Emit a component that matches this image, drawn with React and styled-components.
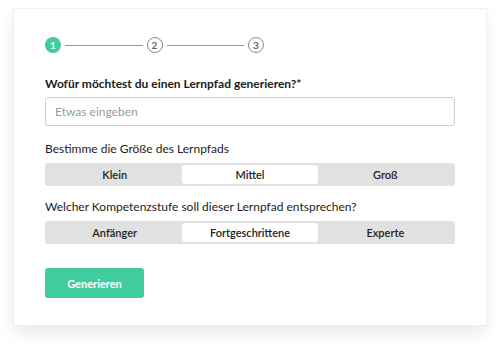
import React, { useState } from 'react';
import styled, { createGlobalStyle } from 'styled-components';

const Global = createGlobalStyle`
    body {
        margin: 0;
        background: #fff;
        font-family: Lato, "Liberation Sans", sans-serif;
        color: #1c1c1c;
    }
`;

const Page = styled.div`
    width: 500px;
    height: 348px;
    padding: 8px 13px 0;
    box-sizing: border-box;
`;

const Card = styled.div`
    background: #fff;
    border: 1px solid #f0f0f0;
    box-shadow: 0 8px 14px rgba(0, 0, 0, 0.08);
    padding: 28px 31px 28px;
    height: 318px;
    box-sizing: border-box;
`;

const Stepper = styled.div`
    display: flex;
    align-items: center;
    width: 219px;
    margin-bottom: 23px;
`;

const Step = styled.div`
    width: 16px;
    height: 16px;
    border-radius: 50%;
    box-sizing: border-box;
    flex: none;
    display: flex;
    align-items: center;
    justify-content: center;
    font-size: 10px;
    font-weight: 700;
    background: ${p => (p.active ? '#40cc9f' : '#fff')};
    color: ${p => (p.active ? '#fff' : '#666')};
    border: ${p => (p.active ? 'none' : '1px solid #8a8a8a')};
`;

const Line = styled.div`
    flex: 1;
    height: 1px;
    background: #9a9a9a;
    margin: 0 4px;
`;

const Label = styled.div`
    font-size: ${p => (p.bold ? 12 : 12)}px;
    font-weight: ${p => (p.bold ? 700 : 400)};
    line-height: 16px;
    margin-bottom: ${p => (p.bold ? 5 : 6)}px;
`;

const Input = styled.input`
    display: block;
    width: 100%;
    height: 29px;
    box-sizing: border-box;
    border: 1px solid #cfcfcf;
    border-radius: 3px;
    padding: 0 9px;
    font-family: inherit;
    font-size: 12px;
    margin-bottom: 15px;
    &::placeholder {
        color: #9a9a9a;
    }
`;

const Segments = styled.div`
    display: grid;
    grid-template-columns: repeat(3, 1fr);
    background: #e1e1e1;
    border-radius: 3px;
    padding: 2px;
    height: 23px;
    box-sizing: border-box;
    margin-bottom: ${p => p.gap}px;
`;

const Segment = styled.button`
    border: none;
    border-radius: 3px;
    background: ${p => (p.selected ? '#fff' : 'transparent')};
    font-family: inherit;
    font-size: 11px;
    font-weight: 600;
    color: #222;
    padding: 0;
    cursor: pointer;
`;

const Submit = styled.button`
    width: 99px;
    height: 30px;
    border: none;
    border-radius: 3px;
    background: #40cc9f;
    color: #fff;
    font-family: inherit;
    font-size: 11px;
    font-weight: 700;
    cursor: pointer;
`;

function Toggle({ options, value, onChange, gap }) {
    return (
        <Segments gap={gap}>
            {options.map(o => (
                <Segment key={o} selected={o === value} onClick={() => onChange(o)}>
                    {o}
                </Segment>
            ))}
        </Segments>
    );
}

export default function App() {
    const [size, setSize] = useState('Mittel');
    const [level, setLevel] = useState('Fortgeschrittene');

    return (
        <Page>
            <Global />
            <Card>
                <Stepper>
                    <Step active>1</Step>
                    <Line />
                    <Step>2</Step>
                    <Line />
                    <Step>3</Step>
                </Stepper>

                <Label bold>Wofür möchtest du einen Lernpfad generieren?*</Label>
                <Input placeholder="Etwas eingeben" />

                <Label>Bestimme die Größe des Lernpfads</Label>
                <Toggle options={['Klein', 'Mittel', 'Groß']} value={size} onChange={setSize} gap={13} />

                <Label>Welcher Kompetenzstufe soll dieser Lernpfad entsprechen?</Label>
                <Toggle options={['Anfänger', 'Fortgeschrittene', 'Experte']} value={level} onChange={setLevel} gap={24} />

                <Submit>Generieren</Submit>
            </Card>
        </Page>
    );
}
